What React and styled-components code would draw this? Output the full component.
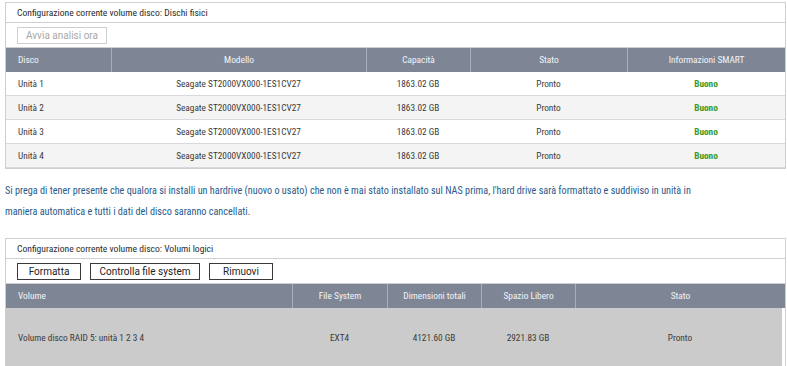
import React from 'react';
import styled, { createGlobalStyle } from 'styled-components';

const GlobalStyle = createGlobalStyle`
  body {
    margin: 0;
    background: #fff;
    font-family: 'Roboto Condensed', 'Roboto', sans-serif;
    color: #333;
  }
`;

const Page = styled.div`
  width: 787px;
  padding-top: 2px;
`;

const Panel = styled.section`
  margin-left: 5px;
  width: 779px;
  border: 1px solid #cfcfcf;
`;

const PanelTitle = styled.div`
  height: 19px;
  line-height: 19px;
  padding-left: 11px;
  font-size: 9.6px;
  color: #2b2b2b;
  border-bottom: 1px solid #cfcfcf;
`;

const Toolbar = styled.div`
  display: flex;
  align-items: center;
  gap: 9px;
  height: 24px;
  padding-left: 11px;
  border-bottom: 1px solid #cfcfcf;
`;

const Button = styled.button`
  height: 17px;
  width: ${(p) => p.$w}px;
  padding: 0;
  background: #fff;
  font-family: 'Roboto', sans-serif;
  font-size: 10px;
  line-height: 15px;
  color: ${(p) => (p.disabled ? '#a8a8a8' : '#222')};
  border: 1px solid ${(p) => (p.disabled ? '#cfcfcf' : '#3a3a3a')};
  border-radius: 0;
`;

const Grid = styled.div`
  display: grid;
  grid-template-columns: ${(p) => p.$cols};
`;

const HeadCell = styled.div`
  height: 24px;
  line-height: 24px;
  background: #7e8696;
  color: #f2f4f7;
  font-size: 9.4px;
  text-align: ${(p) => (p.$left ? 'left' : 'center')};
  padding-left: ${(p) => (p.$left ? '12px' : '0')};
  border-left: ${(p) => (p.$first ? 'none' : '1px solid #a9afba')};
`;

const Cell = styled.div`
  height: 23px;
  line-height: 23px;
  font-size: 9.3px;
  color: ${(p) => (p.$good ? '#3c9a1e' : '#3a3a3a')};
  font-weight: ${(p) => (p.$good ? 700 : 400)};
  background: ${(p) => (p.$shade ? '#f4f4f4' : '#fff')};
  border-bottom: 1px solid #d9d9d9;
  text-align: ${(p) => (p.$left ? 'left' : 'center')};
  padding-left: ${(p) => (p.$left ? '12px' : '0')};
`;

const VolumeRow = styled.div`
  grid-column: 1 / -1;
  display: grid;
  grid-template-columns: inherit;
  margin-right: 3px;
  background: #cbcbcb;
`;

const VolumeCell = styled.div`
  height: 60px;
  line-height: 60px;
  font-size: 9.3px;
  color: #3a3a3a;
  text-align: ${(p) => (p.$left ? 'left' : 'center')};
  padding-left: ${(p) => (p.$left ? '12px' : '0')};
`;

const Notice = styled.p`
  margin: 0;
  padding: 11px 0 16px 5px;
  font-size: 10.2px;
  line-height: 21px;
  color: #285b8c;
`;

const disks = [1, 2, 3, 4];

export default function App() {
  return (
    <Page>
      <GlobalStyle />
      <Panel>
        <PanelTitle>Configurazione corrente volume disco: Dischi fisici</PanelTitle>
        <Toolbar>
          <Button $w={90} disabled>Avvia analisi ora</Button>
        </Toolbar>
        <Grid $cols="105px 255px 104px 157px 158px">
          <HeadCell $left $first>Disco</HeadCell>
          <HeadCell>Modello</HeadCell>
          <HeadCell>Capacità</HeadCell>
          <HeadCell>Stato</HeadCell>
          <HeadCell>Informazioni SMART</HeadCell>
          {disks.map((n) => {
            const shade = n % 2 === 0;
            return (
              <React.Fragment key={n}>
                <Cell $left $shade={shade}>Unità {n}</Cell>
                <Cell $shade={shade}>Seagate ST2000VX000-1ES1CV27</Cell>
                <Cell $shade={shade}>1863.02 GB</Cell>
                <Cell $shade={shade}>Pronto</Cell>
                <Cell $shade={shade} $good>Buono</Cell>
              </React.Fragment>
            );
          })}
        </Grid>
      </Panel>

      <Notice>
        Si prega di tener presente che qualora si installi un hardrive (nuovo o usato) che non è mai stato installato sul NAS prima, l'hard drive sarà formattato e suddiviso in unità in
        <br />
        maniera automatica e tutti i dati del disco saranno cancellati.
      </Notice>

      <Panel>
        <PanelTitle>Configurazione corrente volume disco: Volumi logici</PanelTitle>
        <Toolbar>
          <Button $w={64}>Formatta</Button>
          <Button $w={110}>Controlla file system</Button>
          <Button $w={64}>Rimuovi</Button>
        </Toolbar>
        <Grid $cols="286px 95px 94px 94px 210px">
          <HeadCell $left $first>Volume</HeadCell>
          <HeadCell>File System</HeadCell>
          <HeadCell>Dimensioni totali</HeadCell>
          <HeadCell>Spazio Libero</HeadCell>
          <HeadCell>Stato</HeadCell>
          <VolumeRow>
            <VolumeCell $left>Volume disco RAID 5: unità 1 2 3 4</VolumeCell>
            <VolumeCell>EXT4</VolumeCell>
            <VolumeCell>4121.60 GB</VolumeCell>
            <VolumeCell>2921.83 GB</VolumeCell>
            <VolumeCell>Pronto</VolumeCell>
          </VolumeRow>
        </Grid>
      </Panel>
    </Page>
  );
}
